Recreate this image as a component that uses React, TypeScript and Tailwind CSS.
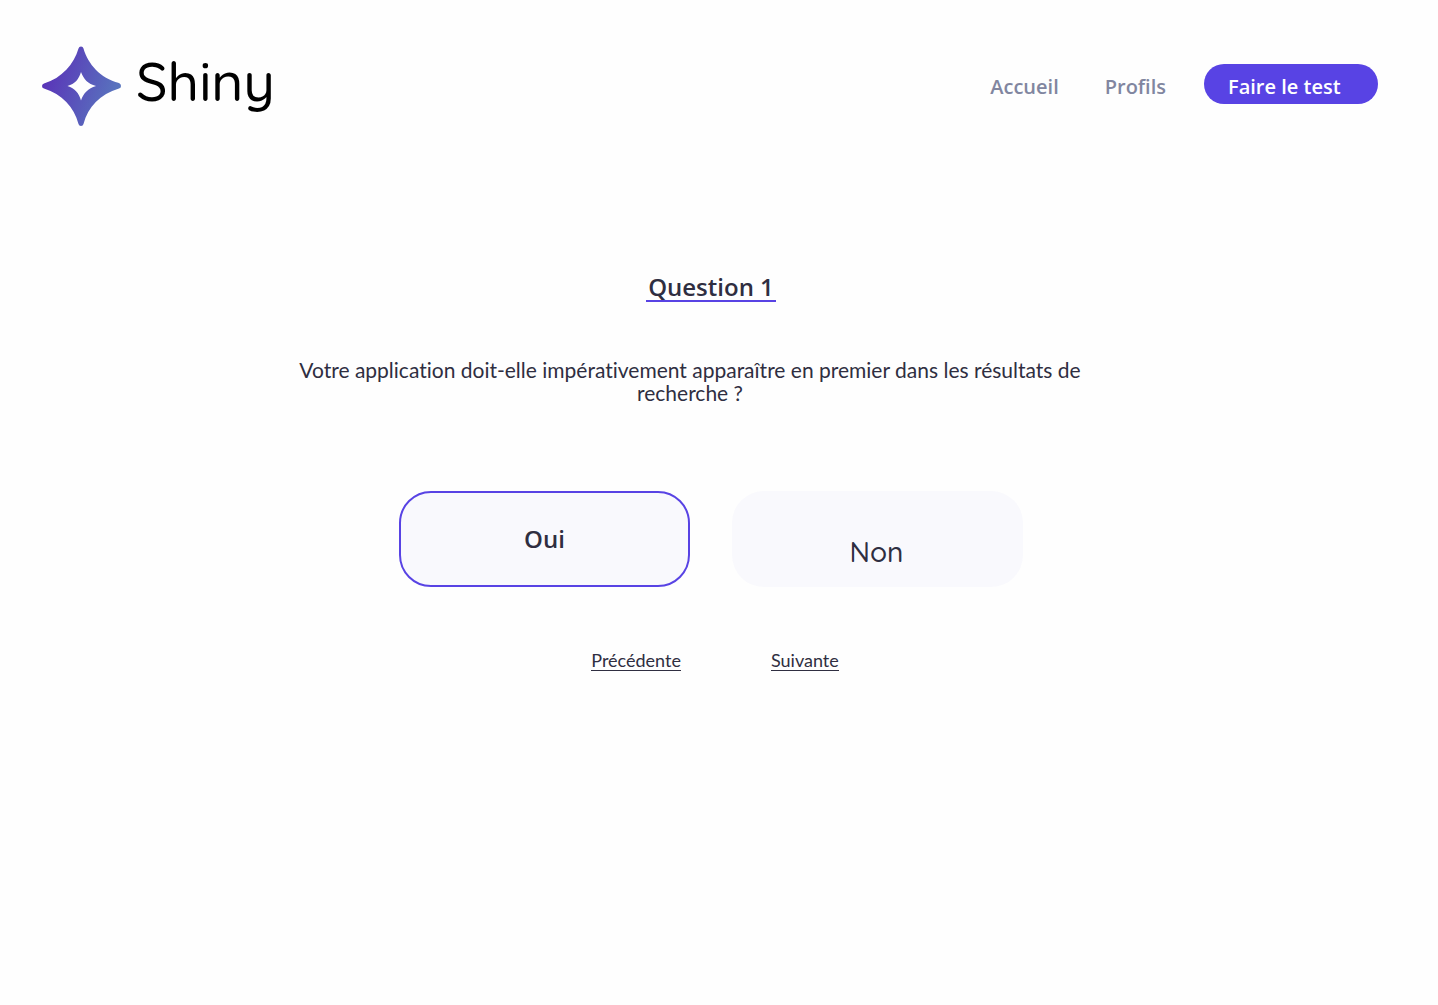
function Logo() {
  return (
    <a href="#accueil" aria-label="Shiny" className="flex items-center gap-3.5 text-black">
      <svg viewBox="0 0 80 80" className="h-20 w-20" aria-hidden="true">
        <defs>
          <linearGradient id="star" x1="0" y1="0.25" x2="1" y2="0.6">
            <stop offset="0.1" stopColor="#5a36b8" />
            <stop offset="1" stopColor="#5878be" />
          </linearGradient>
        </defs>
        <path
          fill="url(#star)"
          fillRule="evenodd"
          d="M36.500 2.500Q37 0.500 39 0.500T41.500 2.500C46 18 58 32 77 37Q79 38 79 40T77 42.500C58 48 46 61 41.500 78Q41 80 39 80T36.500 78C32 61 20 48 2 42.500Q0 42 0 40T2 37.500C20 32 32 18 36.500 2.500Z M39 26C37 33 33 38 25.500 40C33 42.500 37 47 39 54.500C41.500 47 46 42.500 54 40C46 38 41.500 33 39 26Z"
        />
      </svg>
      <span className="-mt-2.5 font-['Quicksand','Lato',sans-serif] text-[55px] leading-[68px] font-medium">Shiny</span>
    </a>
  );
}

export default function App() {
  return (
    <div className="min-h-screen bg-[#fefefe] font-['Trebuchet_MS','Open_Sans',sans-serif] text-[#2f2e41]">
      <header className="flex items-center justify-between pt-[46px] pr-[60px] pl-[42px]">
        <Logo />
        <nav className="flex items-center text-[20px] leading-6 font-semibold text-[#8186a0]">
          <a href="#accueil" className="mr-[46px] pt-0.5">Accueil</a>
          <a href="#profils" className="mr-[38px] pt-0.5">Profils</a>
          <a href="#test" className="mb-1 flex h-10 w-[174px] items-center rounded-full bg-[#5843e4] pt-1.5 pl-6 text-white">
            Faire le test
          </a>
        </nav>
      </header>

      <main className="flex flex-col items-center pt-[148px] pr-4">
        <h1 className="border-b-2 border-[#5843e4] px-0.5 text-[24px] leading-[26px] font-semibold">Question 1</h1>
        <p className="mt-14 mr-[42px] max-w-[800px] text-center font-['Trebuchet_MS','Lato',sans-serif] text-[21px] leading-[23px] [font-variant-ligatures:none]">
          Votre application doit-elle impérativement apparaître en premier dans les résultats de recherche ?
        </p>
        <div className="mt-[87px] flex gap-[42px]">
          <button type="button" aria-pressed="true" className="h-24 w-[291px] rounded-[32px] border-2 border-[#5843e4] bg-[#f9f9fd] text-[24px] font-semibold">
            Oui
          </button>
          <button type="button" aria-pressed="false" className="h-24 w-[291px] rounded-[32px] bg-[#f9f9fd] pt-[26px] pr-0.5 font-['Quicksand','Lato',sans-serif] text-[28px] font-medium">
            Non
          </button>
        </div>
        <div className="mt-16 ml-2 flex gap-[90px] font-['Trebuchet_MS','Lato',sans-serif] text-[18px] leading-[19px]">
          <a href="#precedente" className="border-b border-[#2f2e41]">Précédente</a>
          <a href="#suivante" className="border-b border-[#2f2e41]">Suivante</a>
        </div>
      </main>
    </div>
  );
}
